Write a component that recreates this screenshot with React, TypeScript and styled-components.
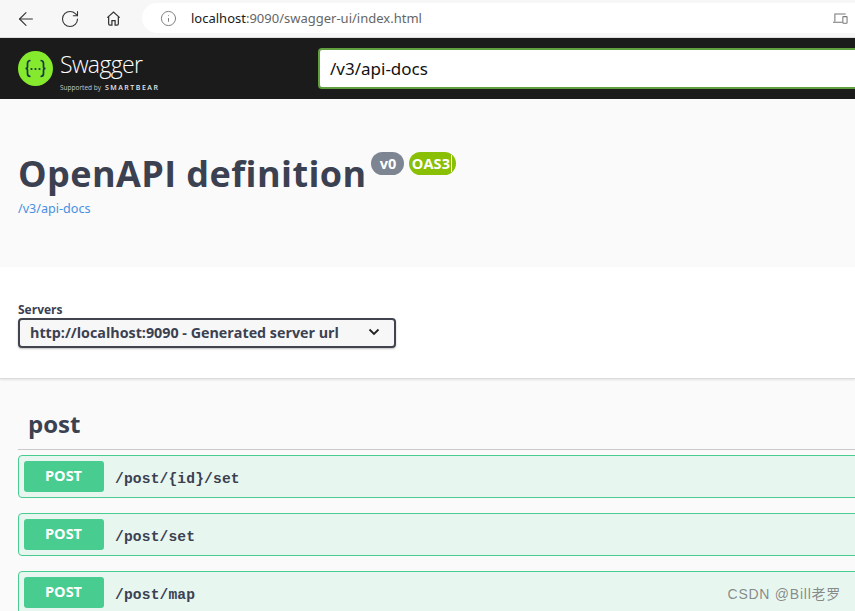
import React from "react";
import styled, { createGlobalStyle } from "styled-components";
import { ArrowLeft, RotateCw, Info } from "lucide-react";

const Global = createGlobalStyle`
  html, body { margin: 0; padding: 0; background: #fff; }
  #root { width: 855px; height: 611px; overflow: hidden; }
  * { box-sizing: border-box; }
`;

const Page = styled.div`
  position: relative;
  width: 855px;
  height: 611px;
  overflow: hidden;
  display: flex;
  flex-direction: column;
  font-family: "Open Sans", "Noto Sans", sans-serif;
  color: #3b4151;
`;

const BrowserBar = styled.div`
  height: 38px;
  flex: none;
  display: flex;
  align-items: center;
  background: #f7f7f7;
  border-bottom: 1px solid #dedede;
  padding: 0 0 0 15px;
`;

const NavButton = styled.span<{ $w: number }>`
  width: ${(p) => p.$w}px;
  flex: none;
  display: flex;
  align-items: center;
  color: #333;
`;

const AddressPill = styled.div`
  flex: 1;
  height: 30px;
  margin-top: -1px;
  background: #fff;
  border-radius: 15px 0 0 15px;
  display: flex;
  align-items: center;
  padding: 0 7px 0 18px;
  font-family: "Noto Sans", "Open Sans", sans-serif;
  font-size: 13px;
`;

const InfoIcon = styled.span`
  display: flex;
  color: #757575;
  margin-right: 14px;
`;

const Host = styled.span`
  color: #1a1a1a;
`;

const UrlRest = styled.span`
  color: #666;
  flex: 1;
`;

const TopBar = styled.header`
  height: 61px;
  flex: none;
  background: #1b1b1b;
  display: flex;
  align-items: center;
  padding-left: 18px;
`;

const Logo = styled.div`
  width: 300px;
  flex: none;
  display: flex;
  align-items: center;
  gap: 7px;
`;

const LogoWords = styled.div`
  display: flex;
  flex-direction: column;
  color: #fff;
  gap: 3px;
  margin-top: 2px;
`;

const LogoName = styled.span`
  font-family: "Open Sans", sans-serif;
  font-size: 23px;
  line-height: 32px;
  font-weight: 300;
  letter-spacing: -0.65px;
`;

const LogoSub = styled.span`
  display: flex;
  align-items: baseline;
  gap: 4px;
  font-size: 6.5px;
  line-height: 9px;
  color: #c8c8c8;
  white-space: nowrap;
`;

const LogoBear = styled.span`
  font-size: 7px;
  font-weight: 600;
  letter-spacing: 1.5px;
  color: #e6e6e6;
`;

const SpecInput = styled.div`
  flex: none;
  width: 620px;
  height: 41px;
  background: #fff;
  border: 2px solid #62a03f;
  border-radius: 4px 0 0 4px;
  padding-left: 10px;
  display: flex;
  align-items: center;
  font-family: "Noto Sans", sans-serif;
  font-size: 17px;
  color: #111;
`;

const InfoSection = styled.section`
  height: 168px;
  flex: none;
  background: #fafafa;
  padding: 50px 18px 0;
`;

const TitleRow = styled.div`
  display: flex;
  align-items: flex-start;
`;

const Title = styled.h1`
  margin: 0;
  font-family: "Open Sans", sans-serif;
  font-size: 36px;
  line-height: 49px;
  font-weight: 700;
  letter-spacing: 0.41px;
  color: #3b4151;
`;

const Badge = styled.span<{ $bg: string; $w: number; $ml: number; $pad: number }>`
  margin: 3px 0 0 ${(p) => p.$ml}px;
  width: ${(p) => p.$w}px;
  height: 23px;
  flex: none;
  overflow: hidden;
  border-radius: 12px;
  background: ${(p) => p.$bg};
  color: #fff;
  font-family: "Open Sans", sans-serif;
  font-size: 14.5px;
  font-weight: 700;
  line-height: 23px;
  padding-left: ${(p) => p.$pad}px;
  white-space: nowrap;
`;

const ClippedLabel = styled.span`
  display: inline-block;
  width: 40px;
  height: 17px;
  line-height: 17px;
  vertical-align: top;
  margin-top: 3px;
  overflow: hidden;
  border-right: 1px solid #fff;
  letter-spacing: 0.2px;
`;

const SpecLink = styled.a`
  display: block;
  margin-top: 3px;
  font-family: "Noto Sans", sans-serif;
  font-size: 12.6px;
  line-height: 16px;
  color: #4990e2;
`;

const ServerSection = styled.section`
  height: 112px;
  flex: none;
  background: #fff;
  padding: 35px 18px 0;
  border-bottom: 1px solid #dcdcdc;
  box-shadow: 0 1px 2px rgba(0, 0, 0, 0.1);
  position: relative;
`;

const ServerLabel = styled.div`
  font-size: 12px;
  line-height: 16px;
  font-weight: 700;
`;

const ServerSelect = styled.div`
  width: 378px;
  height: 30px;
  background: #f7f7f7;
  border: 2px solid #41444e;
  border-radius: 4px;
  box-shadow: 0 1px 2px rgba(0, 0, 0, 0.25);
  display: flex;
  align-items: center;
  justify-content: space-between;
  padding: 0 14px 2px 10px;
  font-size: 14.3px;
  font-weight: 700;
  white-space: nowrap;
`;

const Operations = styled.main`
  flex: 1;
  background: #fafafa;
  padding: 23px 0 0 18px;
`;

const TagHeader = styled.h3`
  margin: 0 0 5px;
  height: 48px;
  border-bottom: 1px solid #c9c9ca;
  padding-left: 10px;
  font-family: "Open Sans", sans-serif;
  font-size: 24px;
  line-height: 44px;
  font-weight: 700;
  color: #3b4151;
`;

const OpRow = styled.div`
  height: 43px;
  margin-bottom: 15px;
  width: 860px;
  background: #e8f6f0;
  border: 1px solid #49cc90;
  border-radius: 4px;
  display: flex;
  align-items: center;
  padding-left: 5px;
`;

const Method = styled.span`
  width: 80px;
  height: 31px;
  flex: none;
  margin-top: -1px;
  background: #49cc90;
  border-radius: 3px;
  color: #fff;
  font-family: "Open Sans", sans-serif;
  font-size: 14.5px;
  font-weight: 700;
  text-align: center;
  line-height: 30px;
  padding-right: 1px;
`;

const OpPath = styled.span`
  margin: 5px 0 0 11px;
  font-family: "Liberation Mono", monospace;
  font-size: 14.6px;
  font-weight: 700;
  letter-spacing: 0.15px;
  color: #3b4151;
  white-space: pre;
`;

const Watermark = styled.div`
  position: absolute;
  right: 14px;
  bottom: 8px;
  font-family: "Liberation Sans", "Noto Sans CJK SC", sans-serif;
  font-size: 14px;
  letter-spacing: 0.75px;
  color: rgba(90, 90, 90, 0.7);
`;

const LogoMark = () => (
  <svg width="35" height="35" viewBox="0 0 35 35" fill="none">
    <circle cx="17.5" cy="17.5" r="17.5" fill="#85ea2d" />
    <path
      d="M12.5 9.500c-2.400 0-3 1-3 3v3.200c0 1.200-.7 1.800-2 1.800 1.300 0 2 .6 2 1.800v3.200c0 2 .6 3 3 3M22.500 9.500c2.400 0 3 1 3 3v3.200c0 1.200-.7 1.800 2 1.800 1.300 0 2 .6 2 1.800v3.200c0 2 .6 3 3 3"
      stroke="none"
    />
    <path
      d="M12.5 9.500c-2.400 0-3 1-3 3v3.200c0 1.200-.7 1.800-2 1.800 1.300 0 2 .6 2 1.800v3.200c0 2 .6 3 3 3M22.500 9.500c2.400 0 3 1 3 3v3.200c0 1.200.7 1.800 2 1.800-1.300 0-2 .6-2 1.800v3.200c0 2-.6 3-3 3"
      stroke="#173647"
      strokeWidth="1.700"
    />
    <circle cx="13.500" cy="18" r="1.100" fill="#173647" />
    <circle cx="17.500" cy="18" r="1.100" fill="#173647" />
    <circle cx="21.500" cy="18" r="1.100" fill="#173647" />
  </svg>
);

const HomeIcon = () => (
  <svg width="15" height="15" viewBox="0 0 16 17" fill="none" stroke="#333" strokeWidth="1.400">
    <path d="M1 7.500 8 1.200l7 6.300M2.500 6.500v8a1.500 1.500 0 0 0 1.500 1.500h2.200v-5.200h3.600V16H12a1.500 1.500 0 0 0 1.500-1.500v-8" />
  </svg>
);

const DevicesIcon = () => (
  <svg width="15" height="11" viewBox="0 0 16 11" fill="none" stroke="#777" strokeWidth="1.100">
    <path d="M13.500.6H2v8M0 9.400h10" />
    <rect x="10.500" y="3.500" width="4.500" height="7" rx=".6" />
  </svg>
);

const Chevron = () => (
  <svg width="12" height="8" viewBox="0 0 12 8" fill="none" stroke="#222" strokeWidth="1.800">
    <path d="M1.500 1.500 6 6l4.500-4.500" />
  </svg>
);

const paths = ["/post/{id}/set", "/post/set", "/post/map"];

export default function App() {
  return (
    <Page>
      <Global />
      <BrowserBar>
        <NavButton $w={45}>
          <ArrowLeft size={22} strokeWidth={1.200} />
        </NavButton>
        <NavButton $w={46}>
          <RotateCw size={20} strokeWidth={1.300} />
        </NavButton>
        <NavButton $w={36}>
          <HomeIcon />
        </NavButton>
        <AddressPill>
          <InfoIcon>
            <Info size={17} strokeWidth={1.300} />
          </InfoIcon>
          <Host>localhost</Host>
          <UrlRest>:9090/swagger-ui/index.html</UrlRest>
          <DevicesIcon />
        </AddressPill>
      </BrowserBar>
      <TopBar>
        <Logo>
          <LogoMark />
          <LogoWords>
            <LogoName>Swagger</LogoName>
            <LogoSub>
              Supported by <LogoBear>SMARTBEAR</LogoBear>
            </LogoSub>
          </LogoWords>
        </Logo>
        <SpecInput>/v3/api-docs</SpecInput>
      </TopBar>
      <InfoSection>
        <TitleRow>
          <Title>OpenAPI definition</Title>
          <Badge $bg="#7d8492" $w={33} $ml={4} $pad={9}>
            v0
          </Badge>
          <Badge $bg="#89bf04" $w={47} $ml={5} $pad={3}>
            <ClippedLabel>OAS3</ClippedLabel>
          </Badge>
        </TitleRow>
        <SpecLink>/v3/api-docs</SpecLink>
      </InfoSection>
      <ServerSection>
        <ServerLabel>Servers</ServerLabel>
        <ServerSelect>
          http://localhost:9090 - Generated server url
          <Chevron />
        </ServerSelect>
      </ServerSection>
      <Operations>
        <TagHeader>post</TagHeader>
        {paths.map((p) => (
          <OpRow key={p}>
            <Method>POST</Method>
            <OpPath>{p}</OpPath>
          </OpRow>
        ))}
      </Operations>
      <Watermark>CSDN @Bill老罗</Watermark>
    </Page>
  );
}
